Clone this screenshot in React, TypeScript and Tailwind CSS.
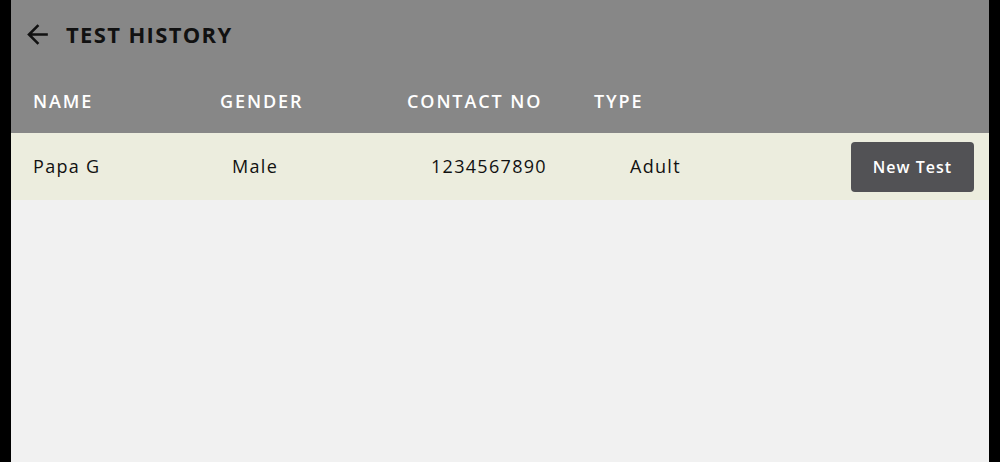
import { MdArrowBack } from 'react-icons/md';

const columns = ['NAME', 'GENDER', 'CONTACT NO', 'TYPE'];

const rows = [{ name: 'Papa G', gender: 'Male', contact: '1234567890', type: 'Adult' }];

export default function App() {
  return (
    <div className="flex h-[462px] w-[1000px] bg-black" style={{ fontFamily: '"Open Sans", "Liberation Sans", sans-serif' }}>
      <div className="ml-[11px] flex w-[978px] flex-col bg-[#f1f1f1]">
        <div className="h-[133px] bg-[#878787]">
          <div className="flex h-[69px] items-center pl-[11px]">
            <MdArrowBack size={31} className="text-[#111]" />
            <h1 className="ml-[13px] text-[22px] font-bold tracking-[1.35px] text-[#111]">TEST HISTORY</h1>
          </div>
          <div className="flex h-[64px] items-center pl-[22px]">
            {columns.map(c => (
              <div key={c} className="w-[187px] text-[18px] font-semibold tracking-[1.9px] text-white">
                {c}
              </div>
            ))}
          </div>
        </div>
        {rows.map(r => (
          <div key={r.contact} className="flex h-[67px] items-center bg-[#ecedde] pl-[22px] pr-[15px] text-[18px] tracking-[1.3px] text-[#111]">
            <div className="w-[199px]">{r.name}</div>
            <div className="w-[199px]">{r.gender}</div>
            <div className="w-[199px]">{r.contact}</div>
            <div className="flex-1">{r.type}</div>
            <button className="h-[50px] w-[123px] rounded-[4px] bg-[#525255] text-[16px] font-semibold tracking-[1px] text-white">
              New Test
            </button>
          </div>
        ))}
      </div>
    </div>
  );
}
